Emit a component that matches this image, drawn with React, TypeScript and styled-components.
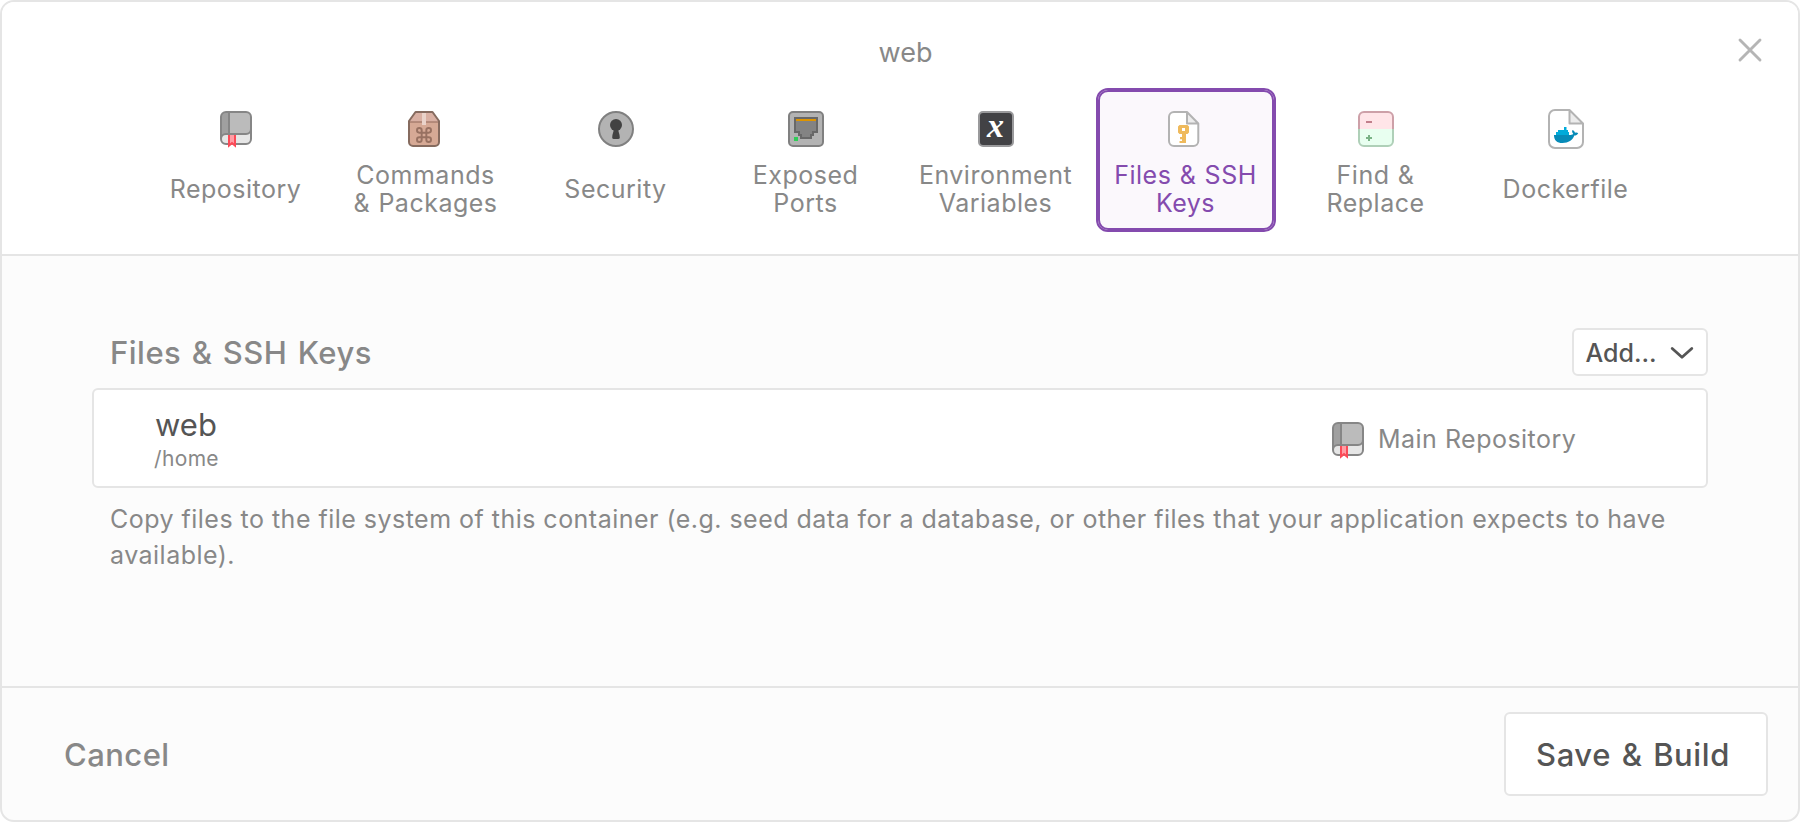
import React from "react";
import styled, { createGlobalStyle, css } from "styled-components";

const line = "#e5e5e5";
const muted = "#888888";
const dark = "#555555";
const purple = "#844bae";

const GlobalStyle = createGlobalStyle`
  * { box-sizing: border-box; }
  body {
    margin: 0;
    background: #ffffff;
    font-family: Inter, "Liberation Sans", sans-serif;
    color: ${muted};
  }
  button {
    margin: 0;
    padding: 0;
    border: 0;
    background: none;
    font-family: inherit;
    color: inherit;
  }
  svg { display: block; flex: none; overflow: visible; }
`;

const Dialog = styled.div`
  display: flex;
  flex-direction: column;
  width: 1800px;
  height: 822px;
  overflow: hidden;
  border: 2px solid ${line};
  border-radius: 14px;
  background: #fcfcfc;
`;

const Header = styled.header`
  padding-top: 34px;
  height: 254px;
  border-bottom: 2px solid ${line};
  background: #ffffff;
`;

const TitleBar = styled.div`
  display: grid;
  grid-template-columns: 1fr auto 1fr;
  height: 32px;
  padding: 0 36px 0 47px;
`;

const Title = styled.h1`
  grid-column: 2;
  margin: 0;
  font-size: 27px;
  font-weight: 400;
  line-height: 34px;
  letter-spacing: 0;
`;

const CloseButton = styled.button`
  justify-self: end;
  align-self: start;
  margin-top: 2px;
`;

const Tabs = styled.nav`
  display: flex;
  gap: 10px;
  margin-top: 20px;
  padding: 0 142px 0 144px;
`;

const Tab = styled.button<{ $active?: boolean }>`
  display: flex;
  flex: 1;
  flex-direction: column;
  align-items: center;
  height: 144px;
  padding-top: 21px;
  border: 2px solid transparent;
  border-radius: 12px;
  ${(p) =>
    p.$active &&
    css`
      border-color: ${purple};
      box-shadow: inset 0 0 0 2px ${purple};
      background: #fbf8fc;
      color: ${purple};
    `}
`;

const TabIcon = styled.span`
  display: flex;
  align-items: center;
  width: 36px;
  height: 36px;
`;

const CenteredTabIcon = styled(TabIcon)`
  justify-content: center;
`;

const TabLabel = styled.span`
  display: flex;
  align-items: center;
  height: 56px;
  margin-top: 14px;
  padding-right: 1px;
  font-size: 25px;
  line-height: 28px;
  letter-spacing: 0.5px;
  word-spacing: 0.8px;
  text-align: center;
  white-space: pre-line;
`;

const Content = styled.main`
  flex: 1;
  padding: 72px 90px 0;
`;

const SectionHead = styled.div`
  display: flex;
  justify-content: space-between;
  height: 48px;
  padding-left: 18px;
`;

const SectionTitle = styled.h2`
  margin: 0;
  font-size: 31px;
  font-weight: 500;
  line-height: 50px;
  letter-spacing: 0.5px;
  word-spacing: 1.6px;
`;

const OutlineButton = styled.button`
  display: flex;
  align-items: center;
  border: 2px solid ${line};
  border-radius: 6px;
  background: #ffffff;
  color: ${dark};
  font-weight: 500;
`;

const AddButton = styled(OutlineButton)`
  justify-content: space-between;
  width: 136px;
  padding: 1px 12px 0 11.5px;
  font-size: 25px;
  line-height: 30px;
`;

const SaveButton = styled(OutlineButton)`
  width: 264px;
  height: 84px;
  padding: 1px 0 0 30px;
  font-size: 31px;
  letter-spacing: 0.6px;
  word-spacing: 1.8px;
`;

const FileRow = styled.div`
  display: flex;
  justify-content: space-between;
  height: 100px;
  margin-top: 12px;
  border: 2px solid ${line};
  border-radius: 6px;
  background: #ffffff;
`;

const FileInfo = styled.div`
  padding: 16px 0 0 60px;
`;

const FileName = styled.div`
  padding-left: 1px;
  font-size: 31px;
  line-height: 37px;
  color: ${dark};
`;

const FilePath = styled.div`
  margin-top: 3px;
  font-size: 21px;
  line-height: 25px;
  letter-spacing: 0.35px;
`;

const FileSource = styled.div`
  display: flex;
  align-items: center;
  gap: 14px;
  width: 374px;
  padding-top: 4px;
  font-size: 25px;
  line-height: 28px;
  letter-spacing: 0.48px;
`;

const SourceName = styled.span`
  margin-top: -2px;
`;

const Hint = styled.p`
  margin: 13px 18px 0;
  font-size: 25px;
  line-height: 36px;
  letter-spacing: 0.478px;
`;

const Footer = styled.footer`
  display: flex;
  align-items: center;
  justify-content: space-between;
  height: 134px;
  padding: 0 30px 0 62px;
  border-top: 2px solid ${line};
`;

const CancelButton = styled.button`
  padding-top: 1px;
  font-size: 31px;
  font-weight: 500;
  letter-spacing: 0.45px;
`;

const RepositoryIcon = () => (
  <svg width="32" height="36" viewBox="0 0 32 36" fill="none">
    <rect x="1" y="1" width="30" height="32" rx="5" fill="#e6e6e6" />
    <path d="M6 1H26a5 5 0 0 1 5 5V18a5 5 0 0 1-5 5H6a5 5 0 0 0-5 5V6a5 5 0 0 1 5-5Z" fill="#bbbbbb" />
    <path d="M6 1H9V23H6a5 5 0 0 0-5 5V6a5 5 0 0 1 5-5Z" fill="#a0a0a0" />
    <path d="M9 1V23M1 28a5 5 0 0 1 5-5H26a5 5 0 0 0 5-5" stroke="#868686" strokeWidth="2" />
    <rect x="1" y="1" width="30" height="32" rx="5" stroke="#868686" strokeWidth="2" />
    <path d="M8 24H16V36L12 33L8 36Z" fill="#ff9da5" />
    <path d="M9 24V34.5L12 32L15 34.5V24" stroke="#fb4a57" strokeWidth="2" />
  </svg>
);

const PackageIcon = () => (
  <svg width="32" height="36" viewBox="0 0 32 36" fill="none">
    <path d="M7.5 1H24.5L31 10V31a4 4 0 0 1-4 4H5a4 4 0 0 1-4-4V10Z" fill="#d6a995" />
    <path d="M7.5 1H24.5L31 10V11H1V10Z" fill="#d9b0a3" />
    <path d="M1 11H31" stroke="#a97f6f" strokeWidth="1.6" />
    <path d="M14 2H18V14H14Z" fill="#ead3ca" />
    <path d="M7.5 1H24.5L31 10V31a4 4 0 0 1-4 4H5a4 4 0 0 1-4-4V10Z" stroke="#866b5f" strokeWidth="2" strokeLinejoin="round" />
    <g transform="translate(6.67 14.67) scale(0.778)">
      <path
        d="M15 6v12a3 3 0 1 0 3-3H6a3 3 0 1 0 3 3V6a3 3 0 1 0-3 3h12a3 3 0 1 0-3-3"
        stroke="#987161"
        strokeWidth="2.5"
      />
    </g>
  </svg>
);

const SecurityIcon = () => (
  <svg width="36" height="36" viewBox="0 0 36 36">
    <circle cx="18" cy="18" r="17" fill="#b3b3b3" stroke="#808080" strokeWidth="2" />
    <circle cx="18" cy="14" r="6" fill="#424242" />
    <path d="M15.8 18H20.2C20.2 21 21.8 23 21.8 26.5Q21.8 28 20 28H16Q14.2 28 14.2 26.5C14.2 23 15.8 21 15.8 18Z" fill="#424242" />
  </svg>
);

const PortIcon = () => (
  <svg width="36" height="36" viewBox="0 0 36 36">
    <rect x="1" y="1" width="34" height="34" rx="4" fill="#b3b3b3" stroke="#808080" strokeWidth="2" />
    <path d="M7 7H29V21H25V24H23V27H13V24H11V21H7Z" fill="#838383" stroke="#686868" strokeWidth="2" />
    <rect x="8" y="8" width="20" height="2" fill="#de9400" />
    <rect x="6" y="26" width="4" height="4" fill="#30cd58" />
  </svg>
);

const VariableIcon = () => (
  <svg width="36" height="36" viewBox="0 0 36 36">
    <rect x="1" y="1" width="34" height="34" rx="4" fill="#424245" stroke="#9a9a9c" strokeWidth="2" />
    <text
      x="17.5"
      y="25.5"
      textAnchor="middle"
      fill="#ffffff"
      fontFamily='"Liberation Serif", serif'
      fontSize="34"
      fontStyle="italic"
      fontWeight="700"
    >
      x
    </text>
  </svg>
);

const KeyFileIcon = () => (
  <svg width="32" height="36" viewBox="0 0 32 36">
    <path d="M6 1H19L30.3 12.5V30a5 5 0 0 1-5 5H6a5 5 0 0 1-5-5V6a5 5 0 0 1 5-5Z" fill="#ffffff" />
    <path d="M19 1V12.5H30.3Z" fill="#ececec" />
    <path
      d="M19 1V12.5H30.3M6 1H19L30.3 12.5V30a5 5 0 0 1-5 5H6a5 5 0 0 1-5-5V6a5 5 0 0 1 5-5Z"
      fill="none"
      stroke="#b3b3b3"
      strokeWidth="2"
      strokeLinejoin="round"
    />
    <path
      fillRule="evenodd"
      fill="#efba5c"
      d="M11.5 14H19.5L21 15.5V21.5L19.5 23H18V32H11.5V30H14V28.3H12V26H14V23H11.5L10 21.5V15.5ZM14 17V20H17V17Z"
    />
  </svg>
);

const DiffIcon = () => (
  <svg width="36" height="36" viewBox="0 0 36 36" fill="none">
    <path d="M1 18V6a5 5 0 0 1 5-5H30a5 5 0 0 1 5 5V18" fill="#ffe5e8" stroke="#cda0a8" strokeWidth="2" />
    <path d="M1 18V30a5 5 0 0 0 5 5H30a5 5 0 0 0 5-5V18" fill="#e8fff0" stroke="#afd0b8" strokeWidth="2" />
    <path d="M8 11H14" stroke="#c27f8b" strokeWidth="2" />
    <path d="M8 27H14M11 24V30" stroke="#7ab386" strokeWidth="2" />
  </svg>
);

const DockerFileIcon = () => (
  <svg width="36" height="40" viewBox="0 0 36 40">
    <path d="M7 1H21.5L35 14.5V33a6 6 0 0 1-6 6H7a6 6 0 0 1-6-6V7a6 6 0 0 1 6-6Z" fill="#ffffff" />
    <path d="M21.5 1V14.5H35Z" fill="#ececec" />
    <path
      d="M21.5 1V14.5H35M7 1H21.5L35 14.5V33a6 6 0 0 1-6 6H7a6 6 0 0 1-6-6V7a6 6 0 0 1 6-6Z"
      fill="none"
      stroke="#b3b3b3"
      strokeWidth="2"
      strokeLinejoin="round"
    />
    <path d="M8 23H10V21H16V18H18.5V21H20V23H21V26H8Z" fill="#00abda" />
    <path
      d="M6 26H22.5C24 26 25 25.5 25.2 24.8C24 23.5 23.8 22.2 24.5 21C26 21.6 26.8 22.6 27 23.8C28.2 23.4 29.4 23.5 30.2 24.2C29.4 25.9 28 26.6 26.3 26.6C24.5 31.5 20.5 34 14.5 34C9 34 6 31.5 6 26Z"
      fill="#078bb8"
    />
  </svg>
);

const CloseIcon = () => (
  <svg width="24" height="24" viewBox="0 0 24 24">
    <path d="M2 2L22 22M22 2L2 22" stroke="#b5b5b5" strokeWidth="2.9" strokeLinecap="round" />
  </svg>
);

const ChevronIcon = () => (
  <svg width="24" height="14" viewBox="0 0 24 14">
    <path
      d="M2.2 2.5L12 11.2L21.8 2.5"
      fill="none"
      stroke={dark}
      strokeWidth="2.8"
      strokeLinecap="round"
      strokeLinejoin="round"
    />
  </svg>
);

const tabs = [
  { label: "Repository", Icon: RepositoryIcon, centered: true },
  { label: "Commands\n& Packages", Icon: PackageIcon },
  { label: "Security", Icon: SecurityIcon },
  { label: "Exposed\nPorts", Icon: PortIcon },
  { label: "Environment\nVariables", Icon: VariableIcon },
  { label: "Files & SSH\nKeys", Icon: KeyFileIcon, active: true },
  { label: "Find &\nReplace", Icon: DiffIcon },
  { label: "Dockerfile", Icon: DockerFileIcon },
];

export default function App() {
  return (
    <>
      <GlobalStyle />
      <Dialog>
        <Header>
          <TitleBar>
            <Title>web</Title>
            <CloseButton aria-label="Close">
              <CloseIcon />
            </CloseButton>
          </TitleBar>
          <Tabs>
            {tabs.map(({ label, Icon, active, centered }) => {
              const IconBox = centered ? CenteredTabIcon : TabIcon;
              return (
                <Tab key={label} $active={active}>
                  <IconBox>
                    <Icon />
                  </IconBox>
                  <TabLabel>{label}</TabLabel>
                </Tab>
              );
            })}
          </Tabs>
        </Header>
        <Content>
          <SectionHead>
            <SectionTitle>Files &amp; SSH Keys</SectionTitle>
            <AddButton>
              Add...
              <ChevronIcon />
            </AddButton>
          </SectionHead>
          <FileRow>
            <FileInfo>
              <FileName>web</FileName>
              <FilePath>/home</FilePath>
            </FileInfo>
            <FileSource>
              <RepositoryIcon />
              <SourceName>Main Repository</SourceName>
            </FileSource>
          </FileRow>
          <Hint>
            Copy files to the file system of this container (e.g. seed data for a database, or other files that your
            application expects to have available).
          </Hint>
        </Content>
        <Footer>
          <CancelButton>Cancel</CancelButton>
          <SaveButton>Save &amp; Build</SaveButton>
        </Footer>
      </Dialog>
    </>
  );
}
